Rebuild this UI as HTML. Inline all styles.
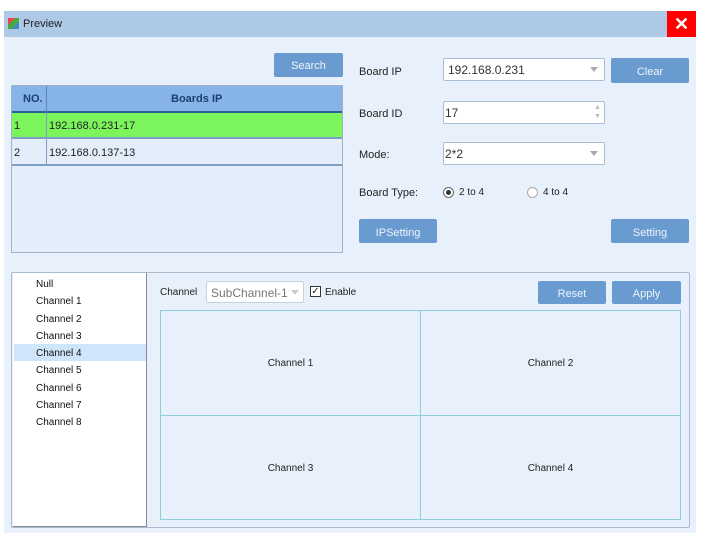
<!DOCTYPE html><html><head><style>
body{margin:0;width:705px;height:538px;background:#fff;font-family:"Liberation Sans",sans-serif;font-size:11px;color:#222;position:relative;overflow:hidden}
div{position:absolute;box-sizing:border-box}
.btn{background:#6a9bd0;color:#eef4fb;text-align:center;border-radius:2px;font-size:11px;padding-top:2px}
.inp{background:#fff;border:1px solid #a9bdd3;border-radius:2px;padding-left:4px;font-size:12px;color:#333}
.arr{position:absolute;right:6px;top:8px;width:0;height:0;border-left:4px solid transparent;border-right:4px solid transparent;border-top:5px solid #aaa}
.cell{border:1px solid #8fcfd8;text-align:center;font-size:10px}
</style></head><body>
<div style="left:4px;top:11px;width:692px;height:522px;background:#e8f1fb"></div>
<div style="left:4px;top:11px;width:692px;height:26px;background:#adc9e6"></div>
<div style="left:8px;top:18px;width:11px;height:11px;background:linear-gradient(135deg,#e44 0 33%,#4a4 33% 66%,#48c 66%)"></div>
<div style="left:23px;top:18px;font-size:11px">Preview</div>
<div style="left:667px;top:11px;width:29px;height:26px;background:#f00;color:#fff;font-size:18px;font-weight:bold;text-align:center;line-height:27px">✕</div>
<div class="btn" style="left:274px;top:53px;width:69px;height:24px;line-height:22px">Search</div>
<div style="left:11px;top:85px;width:332px;height:168px;border:1px solid #9fb4cb;background:#e4eefa"></div>
<div style="left:12px;top:86px;width:330px;height:27px;background:#86b4e8;border-bottom:2px solid #2d5f9a;font-weight:bold;color:#1d3f70;line-height:26px"><span style="position:absolute;left:11px">NO.</span><span style="position:absolute;left:159px">Boards IP</span></div>
<div style="left:46px;top:86px;width:1px;height:79px;background:#5a86b8"></div>
<div style="left:12px;top:113px;width:330px;height:26px;background:#7cf55c;border-bottom:2px solid #7f9fc2;line-height:26px"><span style="position:absolute;left:2px">1</span><span style="position:absolute;left:37px">192.168.0.231-17</span></div>
<div style="left:12px;top:140px;width:330px;height:26px;border-bottom:2px solid #7f9fc2;line-height:26px"><span style="position:absolute;left:2px">2</span><span style="position:absolute;left:37px">192.168.0.137-13</span></div>
<div style="left:46px;top:113px;width:1px;height:52px;background:#7f9fc2"></div>
<div style="left:359px;top:66px">Board IP</div>
<div class="inp" style="left:443px;top:58px;width:162px;height:23px;line-height:23px">192.168.0.231<span class="arr"></span></div>
<div class="btn" style="left:611px;top:58px;width:78px;height:25px;line-height:25px">Clear</div>
<div style="left:359px;top:108px">Board ID</div>
<div class="inp" style="left:443px;top:101px;width:162px;height:23px;line-height:23px;padding-left:1px">17<span style="position:absolute;right:3px;top:1px;color:#bbb;font-size:7px;line-height:9px">▲<br>▼</span></div>
<div style="left:359px;top:149px">Mode:</div>
<div class="inp" style="left:443px;top:142px;width:162px;height:23px;line-height:23px;padding-left:1px">2*2<span class="arr"></span></div>
<div style="left:359px;top:187px">Board Type:</div>
<div style="left:443px;top:187px;width:11px;height:11px;border:1px solid #666;border-radius:50%;background:#fff"><div style="left:2px;top:2px;width:5px;height:5px;border-radius:50%;background:#333"></div></div>
<div style="left:459px;top:187px;font-size:10px">2 to 4</div>
<div style="left:527px;top:187px;width:11px;height:11px;border:1px solid #aaa;border-radius:50%;background:#fff"></div>
<div style="left:543px;top:187px;font-size:10px">4 to 4</div>
<div class="btn" style="left:359px;top:219px;width:78px;height:24px;line-height:24px">IPSetting</div>
<div class="btn" style="left:611px;top:219px;width:78px;height:24px;line-height:24px">Setting</div>
<div style="left:11px;top:272px;width:679px;height:256px;border:1px solid #a9bbcc;border-radius:2px;background:#e8f1fb"></div>
<div style="left:13px;top:273px;width:134px;height:254px;background:#fff;border-right:1px solid #889;border-bottom:1px solid #889"></div>
<div style="left:14px;top:344px;width:132px;height:17px;background:#cfe5fb"></div>
<div style="left:36px;top:276px;line-height:17.3px;font-size:10px;color:#111">Null<br>Channel 1<br>Channel 2<br>Channel 3<br>Channel 4<br>Channel 5<br>Channel 6<br>Channel 7<br>Channel 8</div>
<div style="left:160px;top:287px;font-size:10px">Channel</div>
<div class="inp" style="left:206px;top:281px;width:98px;height:22px;line-height:22px;color:#777;border-color:#c8d0d8">SubChannel-1<span class="arr" style="right:4px;border-top-color:#ccc"></span></div>
<div style="left:310px;top:286px;width:11px;height:11px;border:1px solid #333;background:#fff;font-size:10px;line-height:9px;text-align:center">✓</div>
<div style="left:325px;top:287px;font-size:10px">Enable</div>
<div class="btn" style="left:538px;top:281px;width:68px;height:23px;line-height:22px">Reset</div>
<div class="btn" style="left:612px;top:281px;width:69px;height:23px;line-height:22px">Apply</div>
<div class="cell" style="left:160px;top:310px;width:261px;height:106px;line-height:106px">Channel 1</div>
<div class="cell" style="left:420px;top:310px;width:261px;height:106px;line-height:106px">Channel 2</div>
<div class="cell" style="left:160px;top:415px;width:261px;height:105px;line-height:105px">Channel 3</div>
<div class="cell" style="left:420px;top:415px;width:261px;height:105px;line-height:105px">Channel 4</div>
</body></html>
